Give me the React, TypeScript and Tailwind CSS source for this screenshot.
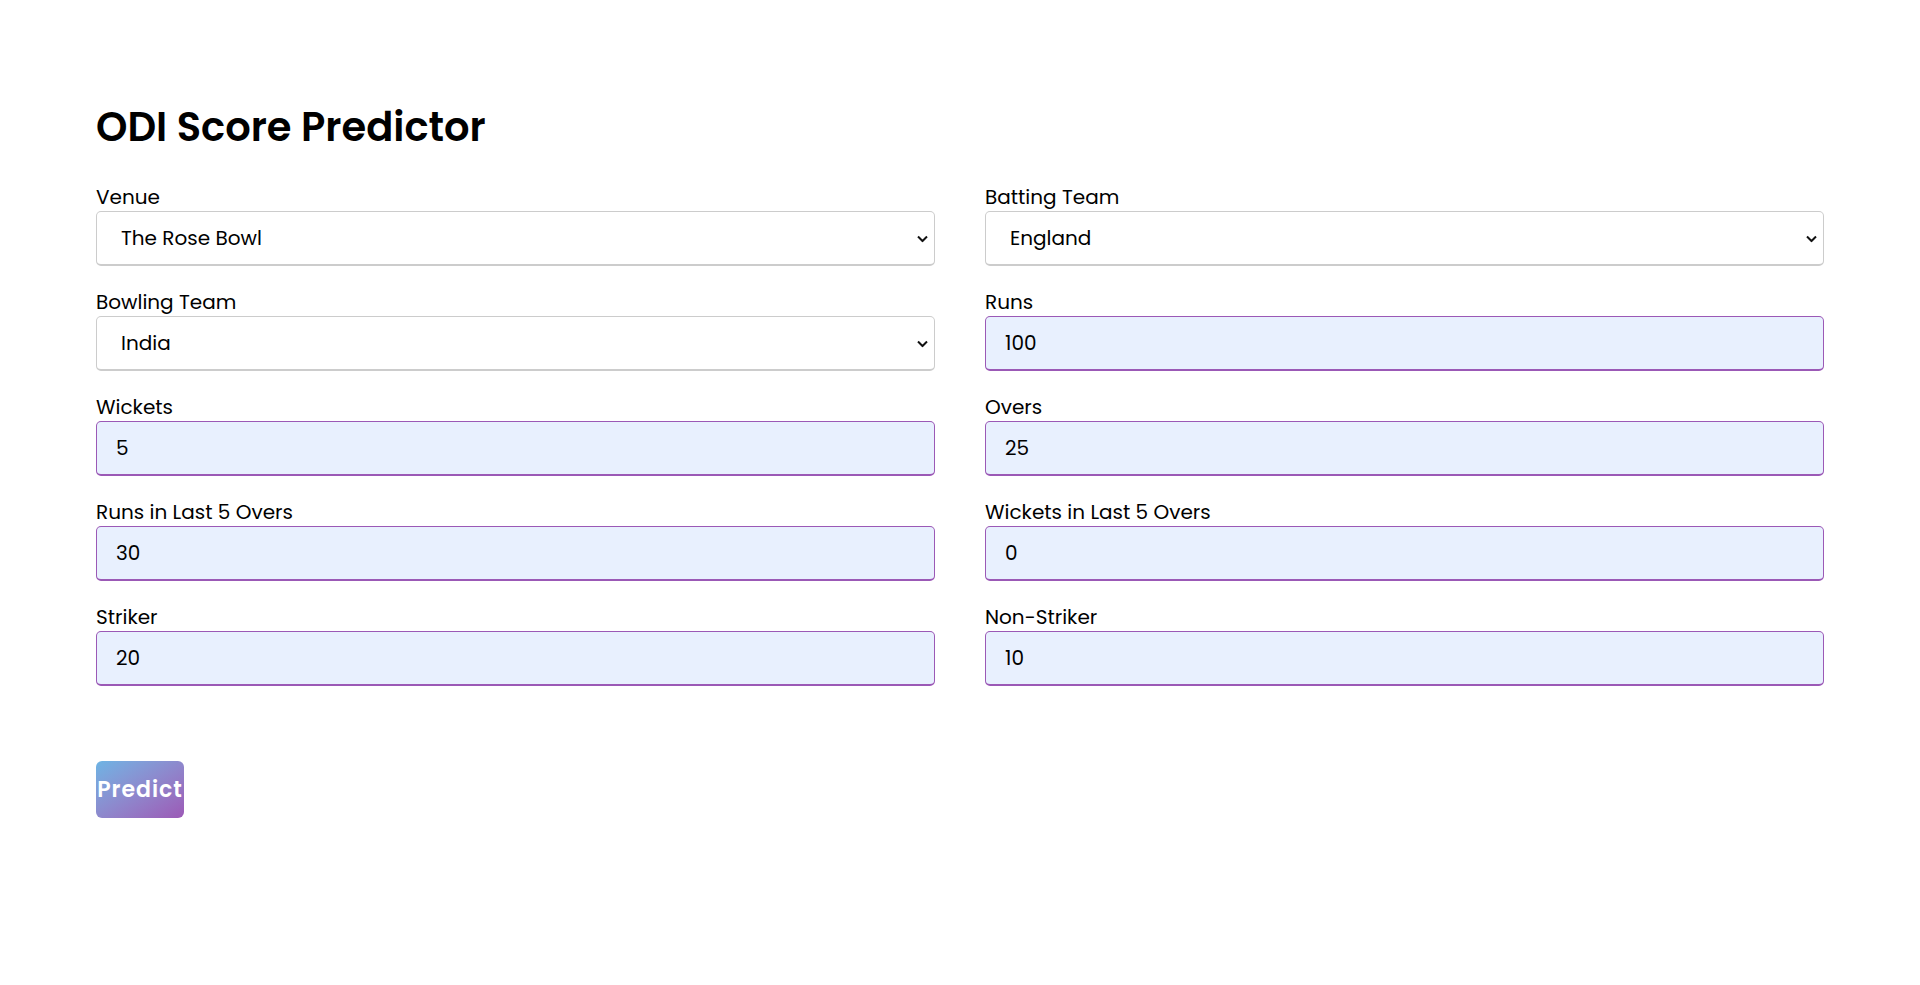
import React from "react";

const font = { fontFamily: "Poppins, Inter, 'Noto Sans', sans-serif" };

const Chevron = () => (
	<svg
		className="pointer-events-none absolute right-[7px] top-1/2 -translate-y-1/2"
		width="11"
		height="7"
		viewBox="0 0 11 7"
		fill="none"
	>
		<path d="M1 1l4.5 4.5L10 1" stroke="#111" strokeWidth="2" />
	</svg>
);

const SelectField = ({ label, value }: { label: string; value: string }) => (
	<div className="flex flex-col">
		<label className="pb-[2px] text-[20px] leading-[24px] text-black">{label}</label>
		<div className="relative">
			<select
				defaultValue={value}
				className="h-[55px] w-full appearance-none rounded-[5px] border border-b-2 border-[#cccccc] bg-white pl-[24px] pr-[24px] text-[20px] text-black outline-none"
				style={font}
			>
				<option>{value}</option>
			</select>
			<Chevron />
		</div>
	</div>
);

const InputField = ({ label, value }: { label: string; value: string }) => (
	<div className="flex flex-col">
		<label className="pb-[2px] text-[20px] leading-[24px] text-black">{label}</label>
		<input
			type="number"
			defaultValue={value}
			className="h-[55px] w-full rounded-[5px] border border-b-2 border-[#9b59b6] bg-[#e8f0fe] pl-[19px] text-[20px] text-black outline-none [appearance:textfield]"
			style={font}
		/>
	</div>
);

export default function App() {
	return (
		<div className="min-h-[985px] bg-white px-[96px] pt-[107px]" style={font}>
			<h1 className="text-[40px] font-semibold leading-none text-black">ODI Score Predictor</h1>
			<div className="mt-[38px] grid grid-cols-2 gap-x-[50px] gap-y-[24px]">
				<SelectField label="Venue" value="The Rose Bowl" />
				<SelectField label="Batting Team" value="England" />
				<SelectField label="Bowling Team" value="India" />
				<InputField label="Runs" value="100" />
				<InputField label="Wickets" value="5" />
				<InputField label="Overs" value="25" />
				<InputField label="Runs in Last 5 Overs" value="30" />
				<InputField label="Wickets in Last 5 Overs" value="0" />
				<InputField label="Striker" value="20" />
				<InputField label="Non-Striker" value="10" />
			</div>
			<button className="mt-[75px] flex h-[57px] w-[88px] items-center justify-center overflow-visible whitespace-nowrap rounded-[6px] bg-gradient-to-br from-[#6cb4e4] to-[#9b59b6] text-[22px] font-semibold tracking-[1px] text-white">
				Predict
			</button>
		</div>
	);
}
